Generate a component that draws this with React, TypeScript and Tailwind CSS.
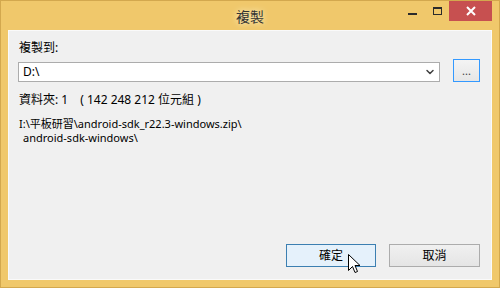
import { ChevronDown } from 'lucide-react';

function CaptionButtons() {
  return (
    <div className="flex items-start justify-end h-full">
      {/* minimize */}
      <div className="w-[25px] h-[20px] flex items-end justify-center pb-[6px]">
        <div className="w-[9px] h-[2px] bg-[#2b2b2b]" />
      </div>
      {/* maximize */}
      <div className="w-[24px] h-[20px] flex items-center justify-center">
        <div className="w-[9px] h-[8px] border border-[#2b2b2b] border-t-2" />
      </div>
      {/* close */}
      <div className="w-[43px] h-[20px] bg-[#c75050] flex items-center justify-center">
        <svg width="10" height="10" viewBox="0 0 10 10">
          <path d="M1 1 L9 9 M9 1 L1 9" stroke="#fff" strokeWidth="2" />
        </svg>
      </div>
    </div>
  );
}

function Cursor() {
  return (
    <svg
      className="absolute left-[347px] top-[253px]"
      width="13"
      height="21"
      viewBox="0 0 13 21"
    >
      <path
        d="M0.5 0.5 L0.5 16.5 L4.5 12.5 L7 18.5 L9.5 17.5 L7 11.5 L12 11.5 Z"
        fill="#fff"
        stroke="#000"
        strokeWidth="1"
        strokeLinejoin="miter"
      />
    </svg>
  );
}

export default function App() {
  return (
    <div
      className="relative w-[500px] h-[288px] bg-[#f0c86b] border border-[#d3a84e] flex flex-col px-[7px] pb-[7px] text-[12px] text-black"
      style={{ fontFamily: '"Noto Sans", "Noto Sans CJK TC", sans-serif' }}
    >
      {/* title bar */}
      <div className="h-[29px] grid grid-cols-[1fr_auto_1fr]">
        <div />
        <div className="pt-[5px] text-[14px] text-[#333] [text-shadow:0_0_6px_#fff8dc]">複製</div>
        <CaptionButtons />
      </div>

      {/* client area */}
      <div className="h-[250px] bg-[#f0f0f0] border border-[#fafafa] flex flex-col pl-[9px] pr-[11px] pt-[9px] pb-[12px]">
        <div className="h-[16px] leading-[16px] pl-[1px]">複製到:</div>

        <div className="mt-[3px] flex items-end gap-[13px]">
          <div className="w-[422px] h-[20px] bg-white border border-[#acacac] flex items-center pl-[4px] pr-[3px]">
            <span className="flex-1 leading-[16px]">D:\</span>
            <ChevronDown size={12} strokeWidth={3} className="text-[#404040]" />
          </div>
          <div className="w-[27px] h-[23px] border border-[#3399ff] bg-gradient-to-b from-[#f4f4f4] to-[#e6e6e6] flex items-center justify-center text-[11px] leading-none text-[#404040]">
            ...
          </div>
        </div>

        <div className="mt-[10px] h-[16px] leading-[16px] pl-[1px] flex">
          <span>資料夾: 1</span>
          <span className="ml-[12px]">( 142 248 212 位元組 )</span>
        </div>

        <div className="mt-[9px] pl-[1px] text-[11px] leading-[14px] flex flex-col">
          <span>I:\平板研習\android-sdk_r22.3-windows.zip\</span>
          <span className="pl-[4px]">android-sdk-windows\</span>
        </div>

        <div className="mt-auto flex justify-end gap-[13px]">
          <div className="w-[90px] h-[23px] bg-[#e5f1fb] border border-[#3c7fb1] flex items-center justify-center">
            確定
          </div>
          <div className="w-[91px] h-[23px] bg-gradient-to-b from-[#f0f0f0] to-[#e5e5e5] border border-[#acacac] flex items-center justify-center">
            取消
          </div>
        </div>
      </div>

      <Cursor />
    </div>
  );
}
